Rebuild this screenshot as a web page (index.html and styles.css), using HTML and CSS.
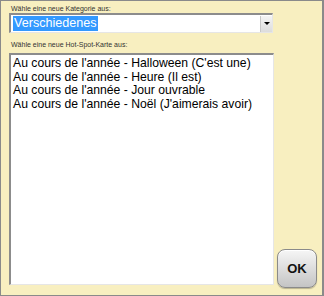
FILE: index.html
```html
<!DOCTYPE html>
<html lang="de">
<head>
    <meta charset="UTF-8">
    <meta name="viewport" content="width=device-width, initial-scale=1.0">
    <title>Hot-Spot-Karte</title>
    <link rel="stylesheet" href="styles.css">
</head>
<body>
    <div class="window">
        <p class="label">Wähle eine neue Kategorie aus:</p>
        <div class="select">
            <span class="selected">Verschiedenes</span>
            <span class="drop-btn"><span class="arrow"></span></span>
        </div>
        <p class="label second">Wähle eine neue Hot-Spot-Karte aus:</p>
        <div class="bottom-row">
            <ul class="list">
                <li>Au cours de l'année - Halloween (C'est une)</li>
                <li>Au cours de l'année - Heure (Il est)</li>
                <li>Au cours de l'année - Jour ouvrable</li>
                <li>Au cours de l'année - Noël (J'aimerais avoir)</li>
            </ul>
            <button class="ok-btn">OK</button>
        </div>
    </div>
</body>
</html>
```

FILE: styles.css
```css
body {
    margin: 0;
    font-family: "Liberation Sans", Arial, sans-serif;
}
.window {
    width: 324px;
    height: 296px;
    box-sizing: border-box;
    background-color: #f8efc0;
    border: 1px solid #8a8a8a;
    border-right-width: 2px;
    padding: 3px 0 0 8px;
    display: flex;
    flex-direction: column;
}
.label {
    margin: 0 0 0 2px;
    font-size: 7px;
    line-height: 9px;
    color: #333;
}
.label.second {
    margin-top: 7px;
    margin-bottom: 4px;
}
.select {
    width: 264px;
    height: 20px;
    box-sizing: border-box;
    background: white;
    border-top: 2px solid #8c8c8c;
    border-left: 2px solid #8c8c8c;
    border-bottom: 1px solid #e6e6e6;
    border-right: 1px solid #e6e6e6;
    display: flex;
    align-items: center;
    justify-content: space-between;
    padding-left: 2px;
}
.selected {
    background-color: #3399ff;
    color: white;
    font-size: 12.6px;
    line-height: 15px;
    padding: 0 1px;
}
.drop-btn {
    width: 11px;
    height: 16px;
    background: linear-gradient(#f4f4f4, #dcdcdc);
    border-left: 1px solid #c8c8c8;
    display: flex;
    align-items: center;
    justify-content: center;
}
.arrow {
    width: 0;
    height: 0;
    border-left: 3px solid transparent;
    border-right: 3px solid transparent;
    border-top: 3px solid #000;
}
.bottom-row {
    display: flex;
    align-items: flex-start;
}
.list {
    width: 265px;
    height: 232px;
    box-sizing: border-box;
    margin: 0;
    padding: 2px 2px;
    list-style: none;
    background: white;
    border-top: 2px solid #8c8c8c;
    border-left: 2px solid #8c8c8c;
    border-bottom: 1px solid #e6e6e6;
    border-right: 1px solid #e6e6e6;
    font-size: 12.2px;
    line-height: 13.7px;
    color: #000;
}
.ok-btn {
    width: 40px;
    height: 39px;
    margin: 196px 0 0 3px;
    border: 1px solid #8a8a8a;
    border-radius: 8px;
    background: linear-gradient(#f6f6f6, #d8d8d8 60%, #c4c4c4);
    box-shadow: inset 0 1px 0 #fff, 0 1px 1px rgba(0, 0, 0, 0.25);
    font-family: "Liberation Sans", Arial, sans-serif;
    font-weight: bold;
    font-size: 13px;
    color: #111;
    padding: 0;
}
```
